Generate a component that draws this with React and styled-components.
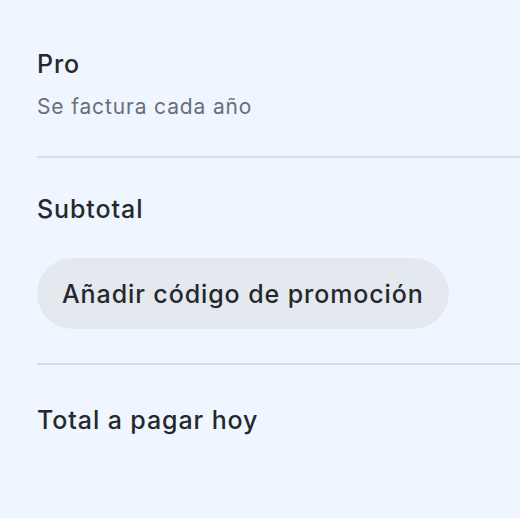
import React from "react";
import styled, { createGlobalStyle } from "styled-components";

const Global = createGlobalStyle`
  html, body {
    margin: 0;
    padding: 0;
    background: #eff6ff;
    overflow: hidden;
  }
  body {
    font-family: Inter, "Noto Sans", sans-serif;
    color: #26282c;
  }
`;

const Summary = styled.div`
  width: 520px;
  height: 518px;
  box-sizing: border-box;
  padding: 48px 0 0 37px;
  overflow: hidden;
`;

const Section = styled.div`
  display: flex;
  flex-direction: column;
  align-items: flex-start;
  padding: ${(p) => p.$pad || "0"};
  border-bottom: ${(p) => (p.$divider ? "2px solid #d8dee6" : "none")};
`;

const Label = styled.div`
  font-size: 25px;
  font-weight: 500;
  line-height: 32px;
  letter-spacing: 0.9px;
`;

const Note = styled.div`
  font-size: 21px;
  line-height: 28px;
  letter-spacing: 0.85px;
  color: #6b6f77;
  margin-top: 13px;
`;

const PromoButton = styled.button`
  margin-top: 33px;
  height: 71px;
  padding: 0 25px;
  border: none;
  border-radius: 36px;
  background: #e4e9f0;
  color: #26282c;
  font-family: inherit;
  font-size: 25px;
  font-weight: 500;
  letter-spacing: 0.9px;
  cursor: pointer;
`;

export default function App() {
  return (
    <>
      <Global />
      <Summary>
        <Section $divider $pad="0 0 35px">
          <Label>Pro</Label>
          <Note>Se factura cada año</Note>
        </Section>
        <Section $divider $pad="35px 0 34px">
          <Label>Subtotal</Label>
          <PromoButton>Añadir código de promoción</PromoButton>
        </Section>
        <Section $pad="39px 0 0">
          <Label>Total a pagar hoy</Label>
        </Section>
      </Summary>
    </>
  );
}
